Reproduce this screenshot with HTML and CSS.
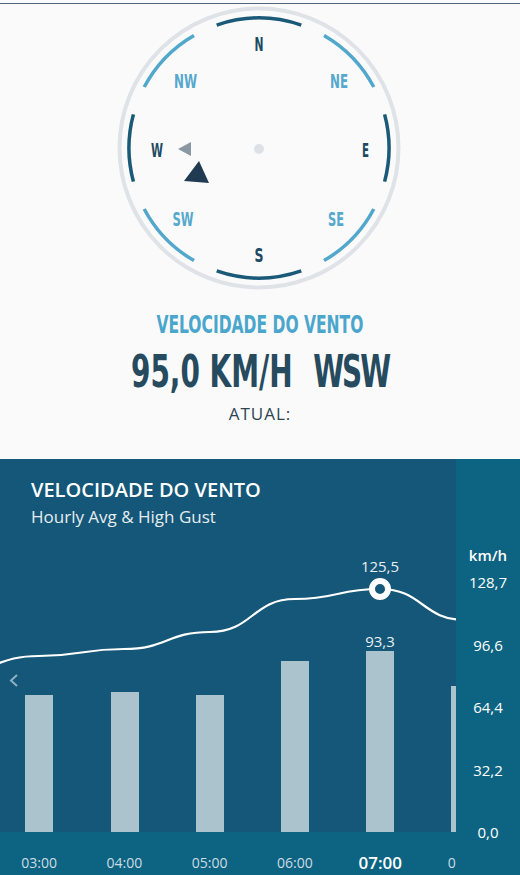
FILE: index.html
```html
<!DOCTYPE html>
<html lang="pt">

<head>
    <meta charset="UTF-8" />
    <meta name="viewport" content="width=device-width, initial-scale=1.0" />
    <title>Velocidade do vento</title>
    <link rel="stylesheet" href="styles.css">
</head>

<body>
    <section class="wind-now">
        <svg class="compass" width="290" height="290" viewBox="0 0 290 290">
            <circle class="ring" cx="144" cy="144" r="139.5" />

            <path class="arc arc-main" d="M101.7 21.1 A130 130 0 0 1 186.3 21.1" />
            <path class="arc arc-main" d="M269.6 110.4 A130 130 0 0 1 269.6 177.6" />
            <path class="arc arc-main" d="M186.3 266.9 A130 130 0 0 1 101.7 266.9" />
            <path class="arc arc-main" d="M18.4 177.6 A130 130 0 0 1 18.4 110.4" />
            <path class="arc arc-sub" d="M209 31.4 A130 130 0 0 1 258.8 83" />
            <path class="arc arc-sub" d="M258.8 205 A130 130 0 0 1 209 256.6" />
            <path class="arc arc-sub" d="M79 256.6 A130 130 0 0 1 29.2 205" />
            <path class="arc arc-sub" d="M29.2 83 A130 130 0 0 1 79 31.4" />

            <text class="dir-main" x="144" y="47" textLength="9" lengthAdjust="spacingAndGlyphs">N</text>
            <text class="dir-sub" x="224" y="83.5" textLength="18" lengthAdjust="spacingAndGlyphs">NE</text>
            <text class="dir-main" x="250.5" y="153" textLength="7" lengthAdjust="spacingAndGlyphs">E</text>
            <text class="dir-sub" x="221" y="222" textLength="16" lengthAdjust="spacingAndGlyphs">SE</text>
            <text class="dir-main" x="144" y="258" textLength="9" lengthAdjust="spacingAndGlyphs">S</text>
            <text class="dir-sub" x="68" y="221.5" textLength="21" lengthAdjust="spacingAndGlyphs">SW</text>
            <text class="dir-main" x="42" y="153" textLength="12" lengthAdjust="spacingAndGlyphs">W</text>
            <text class="dir-sub" x="70.5" y="84" textLength="23" lengthAdjust="spacingAndGlyphs">NW</text>

            <circle class="hub" cx="144" cy="145" r="5" />
            <polygon class="marker-avg" points="63,145 76,138 76,152" />
            <polygon class="marker-now" points="84,157 69,177 94,179" />
        </svg>

        <div class="wind-title"><span>VELOCIDADE DO VENTO</span></div>
        <div class="wind-value"><span>95,0 KM/H<span class="wind-dir">WSW</span></span></div>
        <div class="wind-label">ATUAL:</div>
    </section>

    <section class="chart-panel">
        <div class="chart-main">
            <div class="chart-head">
                <h2>VELOCIDADE DO VENTO</h2>
                <p>Hourly Avg &amp; High Gust</p>
            </div>

            <svg class="chart" width="456" height="292" viewBox="0 0 456 292">
                <g class="bars">
                    <rect x="25" y="155" width="28" height="137" />
                    <rect x="111" y="152" width="28" height="140" />
                    <rect x="196" y="155" width="28" height="137" />
                    <rect x="281" y="121" width="28" height="171" />
                    <rect x="366" y="111" width="28" height="181" />
                    <rect x="451" y="146" width="28" height="146" />
                </g>
                <path class="gust"
                    d="M-46 132 C-3.5 132 -3.5 116 39 116 C81.5 116 81.5 109 124 109 C167 109 167 92 210 92 C252.5 92 252.5 59 295 59 C337.5 59 337.5 49 380 49 C422.5 49 422.5 80 465 80" />
                <circle class="gust-point" cx="380" cy="49" r="8" />
                <text class="value" x="380" y="32">125,5</text>
                <text class="value" x="380" y="107">93,3</text>
                <polyline class="prev" points="17,135 11,140.5 17,146" />
            </svg>

            <div class="hours">
                <span>03:00</span>
                <span>04:00</span>
                <span>05:00</span>
                <span>06:00</span>
                <span class="current">07:00</span>
                <span>08:00</span>
            </div>
        </div>

        <div class="axis">
            <div class="unit">km/h</div>
            <div class="ticks">
                <span>128,7</span>
                <span>96,6</span>
                <span>64,4</span>
                <span>32,2</span>
                <span>0,0</span>
            </div>
        </div>
    </section>
</body>

</html>
```

FILE: styles.css
```css
body {
    margin: 0;
    background: #fafafa;
    font-family: 'Open Sans', sans-serif;
}

/* current wind */
.wind-now {
    box-sizing: border-box;
    height: 456px;
    margin-top: 3px;
    border-top: 1px solid #50667a;
    text-align: center;
}

.compass {
    display: block;
    margin: 0 auto;
}

.ring {
    fill: none;
    stroke: #dfe3e7;
    stroke-width: 4;
}

.arc {
    fill: none;
    stroke-width: 3.5;
}

.arc-main {
    stroke: #1a5a78;
}

.arc-sub {
    stroke: #52a7cc;
}

.dir-main,
.dir-sub {
    font-family: 'DejaVu Sans Condensed', 'DejaVu Sans', sans-serif;
    font-stretch: condensed;
    font-weight: bold;
    font-size: 20px;
    text-anchor: middle;
}

.dir-main {
    fill: #1d4a63;
}

.dir-sub {
    fill: #56a8cd;
}

.hub {
    fill: #dde1e5;
}

.marker-avg {
    fill: #8a98a3;
}

.marker-now {
    fill: #1f3a51;
}

.wind-title,
.wind-value {
    font-family: 'DejaVu Sans Condensed', 'DejaVu Sans', sans-serif;
    font-stretch: condensed;
    font-weight: bold;
}

.wind-title span,
.wind-value > span {
    display: inline-block;
    transform: scaleX(0.69);
}

.wind-title {
    margin-top: 16px;
    font-size: 25px;
    line-height: 30px;
    color: #4aa6cc;
}

.wind-value {
    margin-top: 7px;
    font-size: 45px;
    line-height: 50px;
    color: #264a5e;
}

.wind-dir {
    margin-left: 30px;
    letter-spacing: -3px;
}

.wind-label {
    margin-top: 6px;
    font-size: 17px;
    line-height: 22px;
    letter-spacing: 1px;
    color: #2d4453;
}

/* hourly chart */
.chart-panel {
    display: grid;
    grid-template-columns: 456px 64px;
    height: 416px;
    background: #0d6482;
}

.chart-main {
    display: flex;
    flex-direction: column;
    overflow: hidden;
}

.chart-head {
    box-sizing: border-box;
    height: 81px;
    padding: 18px 31px 0;
    background: #145778;
    color: #fff;
}

.chart-head h2 {
    margin: 0;
    font-size: 20px;
    line-height: 26px;
    font-weight: 600;
}

.chart-head p {
    margin: 3px 0 0;
    font-size: 17px;
    line-height: 22px;
    color: #e6edf1;
}

.chart {
    display: block;
    background: #145778;
}

.bars rect {
    fill: #abc3cd;
}

.gust {
    fill: none;
    stroke: #fff;
    stroke-width: 2.2;
}

.gust-point {
    fill: #145778;
    stroke: #fff;
    stroke-width: 6;
}

.value {
    font-family: 'Open Sans', sans-serif;
    font-size: 15px;
    fill: #e9eff2;
    text-anchor: middle;
}

.prev {
    fill: none;
    stroke: #8fb0c2;
    stroke-width: 2;
}

.hours {
    display: flex;
    align-items: center;
    height: 43px;
    box-sizing: border-box;
    padding-top: 18px;
    margin-left: -3.6px;
    white-space: nowrap;
}

.hours span {
    flex: 0 0 85.3px;
    text-align: center;
    font-size: 14px;
    color: #cddbe2;
}

.hours .current {
    font-size: 17px;
    font-weight: 600;
    color: #fff;
}

.axis {
    padding-top: 86px;
    text-align: center;
    color: #fff;
    font-size: 15px;
    line-height: 20px;
}

.unit {
    font-weight: 600;
    margin-bottom: 7px;
}

.ticks {
    display: flex;
    flex-direction: column;
    gap: 42.5px;
}
```
